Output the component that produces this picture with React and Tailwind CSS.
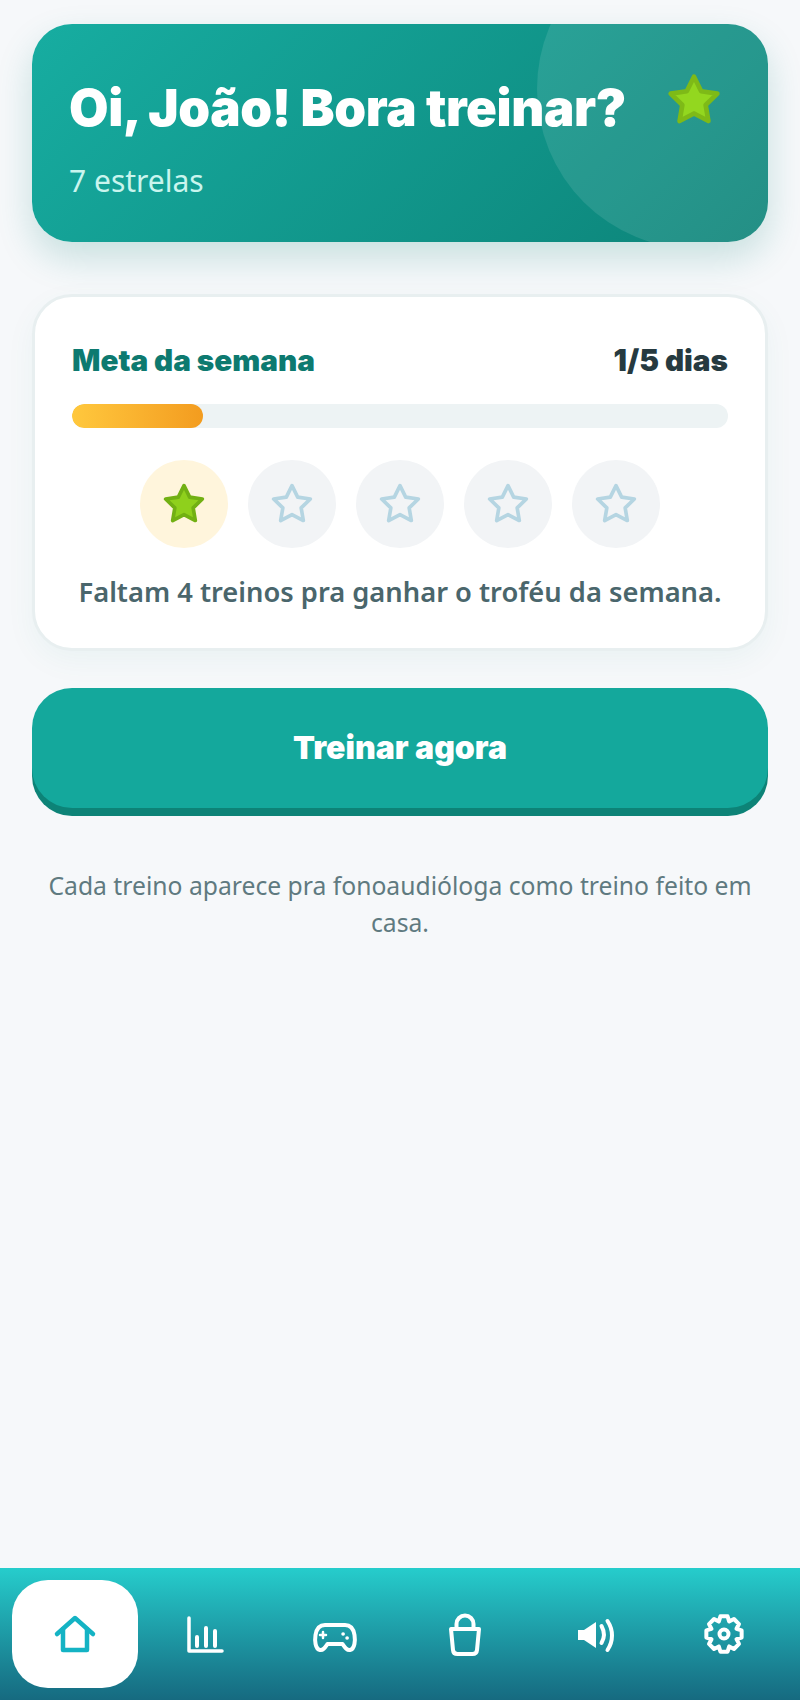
const STAR = "M12 2 15.09 8.26 22 9.27l-5 4.87 1.18 6.88L12 17.77l-6.18 3.25L7 14.14 2 9.27l6.91-1.01z";
const DISPLAY = "font-['Inter','Liberation_Sans',sans-serif]";

function Star({ size, fill, stroke, width = 2 }) {
  return (
    <svg width={size} height={size} viewBox="0 0 24 24" fill={fill} stroke={stroke} strokeWidth={width} strokeLinejoin="round">
      <path d={STAR} />
    </svg>
  );
}

function NavIcon({ children, stroke = "#ffffff", width = 4 }) {
  return (
    <svg width={48} height={48} viewBox="0 0 48 48" fill="none" stroke={stroke} strokeWidth={width} strokeLinecap="round" strokeLinejoin="round">
      {children}
    </svg>
  );
}

// 8 toothed cog outline, centred on the icon box
function gearPath(cx, cy, outer, inner) {
  const pts = [];
  for (let i = 0; i < 8; i++) {
    const a = (i * Math.PI) / 4 - Math.PI / 2;
    [[-0.2, outer], [0.2, outer], [0.39, inner]].forEach(([off, r]) => {
      pts.push(`${(cx + r * Math.cos(a + off)).toFixed(2)} ${(cy + r * Math.sin(a + off)).toFixed(2)}`);
    });
  }
  return `M${pts.join("L")}z`;
}

const navItems = [
  {
    key: "home",
    icon: (
      <NavIcon stroke="#14b3c4" width={4.5}>
        <path d="M6 24 24 8l18 16" />
        <path d="M12 19v21h24V19" />
      </NavIcon>
    ),
  },
  {
    key: "stats",
    icon: (
      <NavIcon width={3.5}>
        <path d="M8 8v33h33" />
        <path d="M16 27v9M25 18v18M34 21v15" strokeWidth={4} />
      </NavIcon>
    ),
  },
  {
    key: "games",
    icon: (
      <NavIcon>
        <path d="M14 15h20c5.500 0 8.500 4 9.500 10 .8 5 .5 14-4.500 15-3 .6-5-2.500-7.500-6h-15c-2.500 3.500-4.500 6.600-7.500 6-5-1-5.300-10-4.500-15C5.500 19 8.500 15 14 15z" />
        <path d="M12 22v6M9 25h6" strokeWidth={2.5} />
        <path d="M32 24h.2M36 28h.2" strokeWidth={3.5} />
      </NavIcon>
    ),
  },
  {
    key: "shop",
    icon: (
      <NavIcon>
        <path d="M10 19h28l-2 21c-.2 2.500-2 4-4.500 4h-15c-2.500 0-4.300-1.500-4.500-4z" />
        <path d="M15.500 19v-5a8.500 8.500 0 0 1 17 0v5" />
      </NavIcon>
    ),
  },
  {
    key: "sound",
    icon: (
      <NavIcon>
        <path d="M7 20h6l12-8v26l-12-8H7z" fill="#ffffff" stroke="none" />
        <path d="M30.500 16c3 5.500 3 12 0 17" />
        <path d="M36.500 11c6 9 6 20 0 29" />
      </NavIcon>
    ),
  },
  {
    key: "settings",
    icon: (
      <NavIcon>
        <path d={gearPath(23, 24, 18, 13.5)} />
        <circle cx="23" cy="24" r="4.500" />
      </NavIcon>
    ),
  },
];

export default function App() {
  return (
    <div className="flex h-[1700px] w-[800px] flex-col overflow-hidden bg-[#f6f8fa] font-['Noto_Sans','Liberation_Sans',sans-serif]">
      <main className="flex flex-1 flex-col px-8 pt-6">
        {/* Hero */}
        <section className="relative h-[218px] overflow-hidden rounded-[40px] bg-[linear-gradient(135deg,#17ada1,#0c8378)] shadow-[0_16px_36px_rgba(13,131,119,0.2)]">
          <div className="absolute -right-[89px] -top-[95px] h-[320px] w-[320px] rounded-full bg-white/10" />
          <div className="relative flex items-start justify-between pl-[37px] pr-[46px] pt-[49px]">
            <h1 className={`${DISPLAY} whitespace-nowrap text-[51px] font-black leading-[70px] tracking-[-0.4px] text-white`}>Oi, João! Bora treinar?</h1>
            <div className="-mt-[1px]">
              <Star size={56} fill="#93d71f" stroke="#7eba17" />
            </div>
          </div>
          <p className="relative mt-[20px] pl-[37px] text-[30px] leading-[36px] text-[#c9f5ee]">7 estrelas</p>
        </section>

        {/* Weekly goal */}
        <section className="mt-[52px] h-[357px] rounded-[40px] border-[3px] border-[#e8eff0] bg-white px-[37px] pt-[43px] shadow-[0_10px_30px_rgba(13,131,119,0.05)]">
          <div className="flex items-center justify-between">
            <h2 className={`${DISPLAY} text-[29.700px] font-black leading-[40px] text-[#0d7a70]`}>Meta da semana</h2>
            <span className={`${DISPLAY} text-[29.700px] font-black leading-[40px] text-[#263a40]`}>1/5 dias</span>
          </div>
          <div className="mt-6 h-6 overflow-hidden rounded-full bg-[#edf3f4]">
            <div className="h-full w-1/5 rounded-full bg-gradient-to-r from-[#ffc83d] to-[#f39c1f]" />
          </div>
          <div className="mt-8 flex justify-center gap-5">
            {[0, 1, 2, 3, 4].map((i) =>
              i === 0 ? (
                <div key={i} className="flex h-[88px] w-[88px] items-center justify-center rounded-full bg-[#fff5dc]">
                  <Star size={44} fill="#8fd01c" stroke="#72b013" />
                </div>
              ) : (
                <div key={i} className="flex h-[88px] w-[88px] items-center justify-center rounded-full bg-[#f2f4f6]">
                  <Star size={44} fill="none" stroke="#b5d5e2" />
                </div>
              )
            )}
          </div>
          <p className="mt-[25px] whitespace-nowrap text-center text-[27.300px] font-semibold leading-[38px] text-[#4a666c]">
            Faltam 4 treinos pra ganhar o troféu da semana.
          </p>
        </section>

        {/* CTA */}
        <button className={`${DISPLAY} mt-[37px] h-[120px] w-full rounded-[40px] bg-[#14a89c] text-[32px] font-black text-white shadow-[0_8px_0_#0d8377]`}>
          Treinar agora
        </button>

        <p className="mt-[59px] text-center text-[24.700px] leading-[37px] text-[#5f7a80]">
          Cada treino aparece pra fonoaudióloga como treino feito em casa.
        </p>
      </main>

      {/* Bottom nav */}
      <nav className="grid h-[132px] grid-cols-6 gap-1 bg-gradient-to-b from-[#26cdcc] to-[#166a80] p-3">
        {navItems.map((item, i) => (
          <div key={item.key} className={i === 0 ? "flex items-center justify-center rounded-[36px] bg-white" : "flex items-center justify-center"}>
            {item.icon}
          </div>
        ))}
      </nav>
    </div>
  );
}
